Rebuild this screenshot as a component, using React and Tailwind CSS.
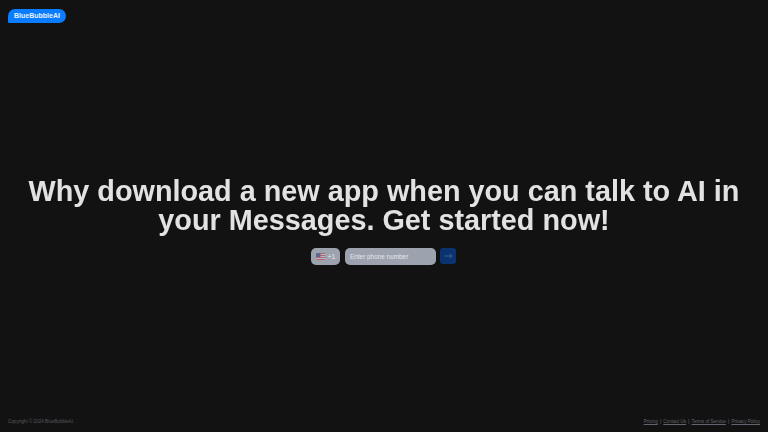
import React from "react";

const links = ["Pricing", "Contact Us", "Terms of Service", "Privacy Policy"];

const Flag = () => (
  <svg width="9" height="7" viewBox="0 0 18 14" className="rounded-[1px]">
    <rect width="18" height="14" fill="#b9bcc6" />
    <rect y="0" width="18" height="2" fill="#b0606e" />
    <rect y="4" width="18" height="2" fill="#b0606e" />
    <rect y="8" width="18" height="2" fill="#b0606e" />
    <rect y="12" width="18" height="2" fill="#b0606e" />
    <rect width="9" height="8" fill="#5f6890" />
  </svg>
);

const App = () => {
  return (
    <div className="h-[432px] w-[768px] overflow-hidden bg-[#121212] flex flex-col font-['Liberation_Sans',Arial,sans-serif]">
      <header className="flex items-start px-2 pt-[9px]">
        <div className="bg-[#0a7cff] text-[#e8f2ff] text-[7px] leading-[14px] font-bold px-[6px] rounded-t-[7px] rounded-br-[7px] rounded-bl-[1px] h-[14px]">
          BlueBubbleAI
        </div>
      </header>

      <main className="flex-1 flex flex-col items-center pt-[154px]">
        <h1 className="text-[#e2e2e2] text-[28.8px] leading-[28.8px] font-bold text-center tracking-normal transform-gpu">
          Why download a new app when you can talk to AI in
          <br />
          your Messages. Get started now!
        </h1>
        <form className="flex items-center mt-[13px] mr-[1px]">
          <button type="button" className="h-[17px] w-[29px] rounded-[5px] bg-[#9ca3af] flex items-center justify-center gap-[3px] text-[7px] leading-[17px] text-[#e4e6ea]">
            <Flag />
            <span>+1</span>
          </button>
          <input
            placeholder="Enter phone number"
            className="ml-[5px] h-[17px] w-[91px] rounded-[5px] bg-[#9ca3af] px-[5px] text-[6.4px] placeholder:text-[#e4e6ea] outline-none"
          />
          <button type="button" className="ml-[4px] h-[16px] w-[16px] rounded-[3px] bg-[#0a3470] flex items-center justify-center">
            <svg width="9" height="6" viewBox="0 0 18 12" fill="none" stroke="#4f7199" strokeWidth="1.5">
              <path d="M1 6h15M11.5 1.5 16 6l-4.5 4.5" />
            </svg>
          </button>
        </form>
      </main>

      <footer className="flex items-center justify-between px-2 pb-[6px] text-[4.6px] leading-[8px] text-[#55585f]">
        <span>Copyright © 2024 BlueBubbleAI.</span>
        <nav className="flex items-center">
          {links.map((l, i) => (
            <React.Fragment key={l}>
              {i > 0 && <span className="mx-[2.2px] text-[#6f737c]">|</span>}
              <a className="underline text-[#61656e]">{l}</a>
            </React.Fragment>
          ))}
        </nav>
      </footer>
    </div>
  );
};

export default App;
